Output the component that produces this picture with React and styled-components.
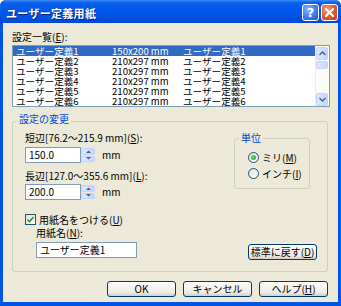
import React from 'react';
import styled, { createGlobalStyle } from 'styled-components';

const Global = createGlobalStyle`
  html, body { margin: 0; padding: 0; background: #ffffff; }
  body {
    font-family: "Noto Sans CJK JP", "Noto Sans", sans-serif;
    font-size: 10px;
    color: #000;
  }
  * { box-sizing: border-box; }
`;

const Window = styled.div`
  width: 341px;
  height: 306px;
  display: flex;
  flex-direction: column;
  background: #0054e3;
  border-radius: 6px 6px 0 0;
  overflow: hidden;
`;

const TitleBar = styled.div`
  height: 23px;
  flex: none;
  display: flex;
  align-items: center;
  padding: 1px 3px 0 6px;
  background: linear-gradient(#3d8cf8 0%, #0a5fea 12%, #0058ee 45%, #0054e3 70%, #0049d6 100%);
`;

const Title = styled.div`
  flex: 1;
  color: #fff;
  font-weight: bold;
  font-size: 11px;
  line-height: 12px;
  padding-top: 2px;
  text-shadow: 1px 1px 0 #0a1f80;
  letter-spacing: 0.3px;
`;

const TitleButtons = styled.div`
  display: flex;
  gap: 2px;
`;

const CaptionButton = styled.div`
  width: 17px;
  height: 17px;
  border: 1px solid #fff;
  border-radius: 3px;
  display: flex;
  align-items: center;
  justify-content: center;
  color: #fff;
  font-family: "DejaVu Sans", sans-serif;
  font-weight: bold;
  font-size: 13px;
  line-height: 1;
  background: ${p => p.$close
    ? 'radial-gradient(circle at 35% 30%, #f29b7f 0%, #e0592f 55%, #c23c16 100%)'
    : 'radial-gradient(circle at 35% 30%, #8db6ff 0%, #3c7cf0 55%, #1d58d8 100%)'};
`;

const Client = styled.div`
  flex: 1;
  margin: 0 3px 4px 3px;
  background: #ece9d8;
  padding: 9px 10px 0 9px;
  display: flex;
  flex-direction: column;
`;

const Label = styled.div`
  line-height: 10px;
  height: 10px;
  white-space: nowrap;
  padding-left: ${p => p.$indent || 0}px;
  margin-top: ${p => p.$mt || 0}px;
`;

const ListBox = styled.div`
  margin-top: 3px;
  width: 318px;
  height: 62px;
  border: 1px solid #7f9db9;
  background: #fff;
  display: flex;
`;

const Rows = styled.div`
  flex: 1;
  display: flex;
  flex-direction: column;
`;

const Row = styled.div`
  height: 10px;
  line-height: 10px;
  font-size: 9.6px;
  display: grid;
  grid-template-columns: 96px 71px 1fr;
  padding-left: 3px;
  white-space: nowrap;
  background: ${p => (p.$selected ? '#316ac5' : 'transparent')};
  color: ${p => (p.$selected ? '#fff' : '#000')};
`;

const ScrollBar = styled.div`
  width: 14px;
  display: flex;
  flex-direction: column;
  background: #fbfbf8;
  border-left: 1px solid #eeede5;
  padding: 1px 1px 0 0;
`;

const ScrollButton = styled.div`
  height: 13px;
  border: 1px solid #c3d3fd;
  border-radius: 2px;
  background: linear-gradient(90deg, #dce6fd, #c5d5fc);
  display: flex;
  align-items: center;
  justify-content: center;
`;

const Thumb = styled.div`
  height: 8px;
  margin-top: 1px;
  border: 1px solid #c3d3fd;
  border-radius: 2px;
  background: linear-gradient(90deg, #dce6fd, #c8d8fc);
`;

const Track = styled.div`
  flex: 1;
`;

const GroupBox = styled.fieldset`
  margin: 7px 0 0 0;
  width: 316px;
  border: 1px solid #d0d0bf;
  border-radius: 3px;
  padding: 5px 10px 11px 12px;
  display: flex;
  min-width: 0;
`;

const GroupLegend = styled.legend`
  color: #0046d5;
  line-height: 10px;
  padding: 0 2px ${p => p.$pad || 0}px 2px;
  margin-left: ${p => p.$offset || 0}px;
`;

const LeftCol = styled.div`
  flex: 1;
  display: flex;
  flex-direction: column;
`;

const RightCol = styled.div`
  width: 83px;
  display: flex;
  flex-direction: column;
  align-items: flex-start;
`;

const SpinRow = styled.div`
  display: flex;
  align-items: center;
  margin-top: ${p => p.$mt || 0}px;
  height: 16px;
`;

const TextInput = styled.div`
  width: ${p => p.$w}px;
  height: 16px;
  border: 1px solid #7f9db9;
  background: #fff;
  line-height: 14px;
  padding-left: 3px;
  margin-left: ${p => p.$ml || 0}px;
  margin-top: ${p => p.$mt || 0}px;
  white-space: nowrap;
`;

const Spinner = styled.div`
  width: 14px;
  height: 16px;
  display: flex;
  flex-direction: column;
  gap: 1px;
  padding: 1px 0;
`;

const SpinHalf = styled.div`
  flex: 1;
  border: 1px solid #c3d3fd;
  border-radius: 2px;
  background: linear-gradient(90deg, #dde7fd, #c3d4fc);
  display: flex;
  align-items: center;
  justify-content: center;
`;

const Unit = styled.span`
  margin-left: 7px;
  line-height: 10px;
`;

const CheckRow = styled.div`
  display: flex;
  align-items: center;
  margin-top: 13px;
  height: 12px;
  gap: 3px;
`;

const CheckBox = styled.div`
  width: 11px;
  height: 11px;
  border: 1px solid #1c5180;
  background: linear-gradient(135deg, #dcdcd7, #fff);
  display: flex;
  align-items: center;
  justify-content: center;
`;

const UnitBox = styled.fieldset`
  margin: 0;
  width: 76px;
  border: 1px solid #d0d0bf;
  border-radius: 3px;
  padding: 8px 0 9px 13px;
  display: flex;
  flex-direction: column;
  gap: 4px;
  min-width: 0;
`;

const RadioRow = styled.div`
  display: flex;
  align-items: center;
  height: 12px;
  gap: 3px;
  white-space: nowrap;
`;

const Radio = styled.div`
  width: 11px;
  height: 11px;
  border-radius: 50%;
  border: 1px solid #1c5180;
  background: linear-gradient(135deg, #dcdcd7, #fff);
  display: flex;
  align-items: center;
  justify-content: center;
  &::after {
    content: '';
    display: ${p => (p.$checked ? 'block' : 'none')};
    width: 5px;
    height: 5px;
    border-radius: 50%;
    background: radial-gradient(circle at 40% 40%, #6fdc6f, #21a121);
  }
`;

const Button = styled.div`
  width: 69px;
  height: 16px;
  border: 1px solid #003c74;
  border-radius: 3px;
  background: linear-gradient(#ffffff 0%, #f4f3ee 40%, #ecebe6 75%, #d6d0c5 100%);
  box-shadow: inset 0 -1px 0 #d6d0c5;
  display: flex;
  align-items: center;
  justify-content: center;
  line-height: 10px;
  white-space: nowrap;
  margin-top: ${p => p.$mt || 0}px;
  margin-left: ${p => p.$ml || 0}px;
`;

const ButtonRow = styled.div`
  display: flex;
  justify-content: flex-end;
  gap: 7px;
  margin-top: 9px;
`;

const Up = () => (
  <svg width="7" height="5" viewBox="0 0 7 5">
    <path d="M0.5 4 L3.5 1 L6.5 4" fill="none" stroke="#4d6185" strokeWidth="1.4" />
  </svg>
);
const Down = () => (
  <svg width="7" height="5" viewBox="0 0 7 5">
    <path d="M0.5 1 L3.5 4 L6.5 1" fill="none" stroke="#4d6185" strokeWidth="1.4" />
  </svg>
);
const SmallUp = () => (
  <svg width="5" height="3" viewBox="0 0 5 3">
    <path d="M0 3 L2.5 0.5 L5 3 Z" fill="#4d6185" />
  </svg>
);
const SmallDown = () => (
  <svg width="5" height="3" viewBox="0 0 5 3">
    <path d="M0 0 L2.5 2.5 L5 0 Z" fill="#4d6185" />
  </svg>
);

const rows = [
  ['ユーザー定義1', '150x200 mm', 'ユーザー定義1'],
  ['ユーザー定義2', '210x297 mm', 'ユーザー定義2'],
  ['ユーザー定義3', '210x297 mm', 'ユーザー定義3'],
  ['ユーザー定義4', '210x297 mm', 'ユーザー定義4'],
  ['ユーザー定義5', '210x297 mm', 'ユーザー定義5'],
  ['ユーザー定義6', '210x297 mm', 'ユーザー定義6'],
];

const SpinField = ({ value, mt }) => (
  <SpinRow $mt={mt}>
    <TextInput $w={56}>{value}</TextInput>
    <Spinner>
      <SpinHalf><SmallUp /></SpinHalf>
      <SpinHalf><SmallDown /></SpinHalf>
    </Spinner>
    <Unit>mm</Unit>
  </SpinRow>
);

export default function App() {
  return (
    <>
      <Global />
      <Window>
        <TitleBar>
          <Title>ユーザー定義用紙</Title>
          <TitleButtons>
            <CaptionButton>?</CaptionButton>
            <CaptionButton $close>
              <svg width="9" height="9" viewBox="0 0 9 9">
                <path d="M1 1 L8 8 M8 1 L1 8" stroke="#fff" strokeWidth="2" strokeLinecap="square" />
              </svg>
            </CaptionButton>
          </TitleButtons>
        </TitleBar>
        <Client>
          <Label>設定一覧(<u>E</u>):</Label>
          <ListBox>
            <Rows>
              {rows.map((r, i) => (
                <Row key={i} $selected={i === 0}>
                  <span>{r[0]}</span>
                  <span>{r[1]}</span>
                  <span>{r[2]}</span>
                </Row>
              ))}
            </Rows>
            <ScrollBar>
              <ScrollButton><Up /></ScrollButton>
              <Thumb />
              <Track />
              <ScrollButton><Down /></ScrollButton>
            </ScrollBar>
          </ListBox>
          <GroupBox>
            <GroupLegend $pad={4} $offset={-8}>設定の変更</GroupLegend>
            <LeftCol>
              <Label>短辺[76.2～215.9 mm](<u>S</u>):</Label>
              <SpinField value="150.0" mt={4} />
              <Label $mt={8}>長辺[127.0～355.6 mm](<u>L</u>):</Label>
              <SpinField value="200.0" mt={3} />
              <CheckRow>
                <CheckBox>
                  <svg width="7" height="7" viewBox="0 0 7 7">
                    <path d="M0.5 3.5 L2.5 5.5 L6.5 1" fill="none" stroke="#21a121" strokeWidth="1.6" />
                  </svg>
                </CheckBox>
                <span>用紙名をつける(<u>U</u>)</span>
              </CheckRow>
              <Label $indent={11} $mt={3}>用紙名(<u>N</u>):</Label>
              <TextInput $w={101} $ml={11} $mt={4}>ユーザー定義1</TextInput>
            </LeftCol>
            <RightCol>
              <UnitBox>
                <GroupLegend $offset={-9}>単位</GroupLegend>
                <RadioRow><Radio $checked /><span>ミリ(<u>M</u>)</span></RadioRow>
                <RadioRow><Radio /><span>インチ(<u>I</u>)</span></RadioRow>
              </UnitBox>
              <Button $mt={55} $ml={14}>標準に戻す(<u>D</u>)</Button>
            </RightCol>
          </GroupBox>
          <ButtonRow>
            <Button>OK</Button>
            <Button>キャンセル</Button>
            <Button>ヘルプ(<u>H</u>)</Button>
          </ButtonRow>
        </Client>
      </Window>
    </>
  );
}
